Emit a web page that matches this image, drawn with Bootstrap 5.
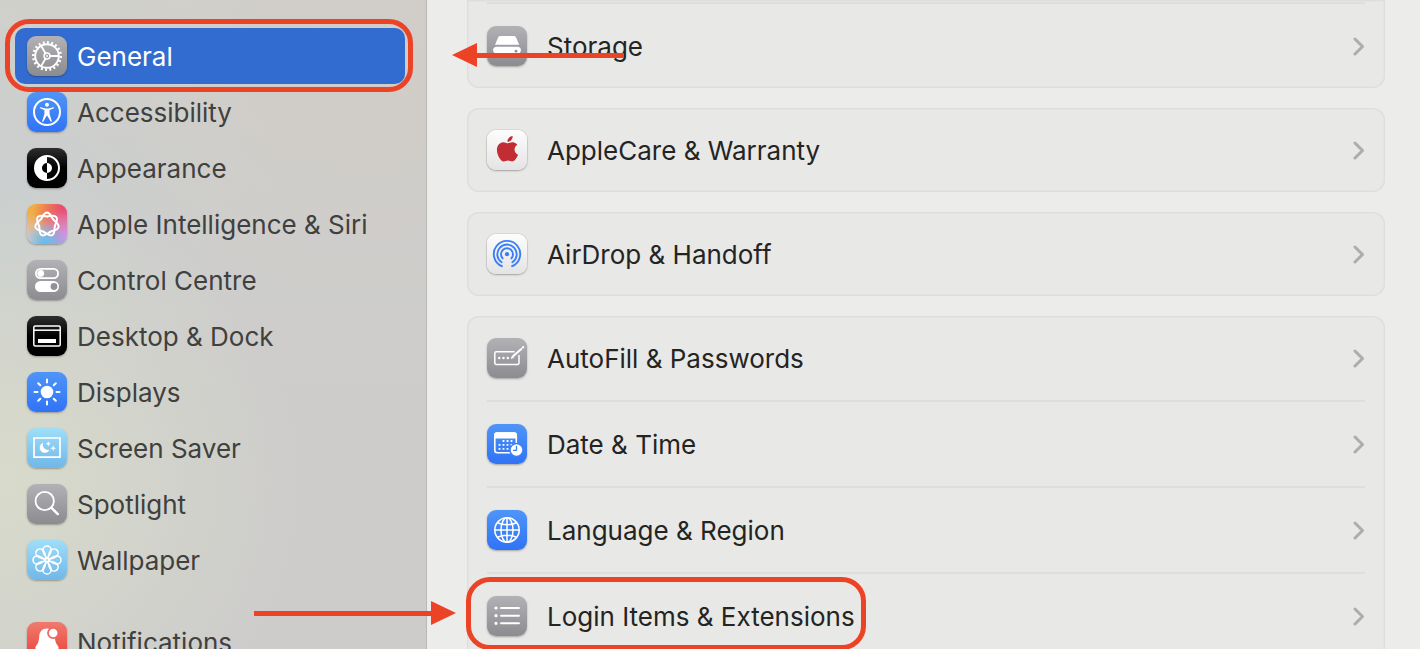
<!DOCTYPE html>
<html lang="en-GB">
<head>
<meta charset="utf-8">
<meta name="viewport" content="width=device-width, initial-scale=1">
<title>System Settings – General</title>
<link href="https://cdn.jsdelivr.net/npm/bootstrap@5.3.0/dist/css/bootstrap.min.css" rel="stylesheet">
<style>
  :root { --callout: #ec4225; --divider: #dededc; }
  body { font-family: Inter, "Liberation Sans", sans-serif; font-size: 26px; line-height: 32px; color: #242423; background: #ececea; }
  a { color: inherit; text-decoration: none; }
  .item-text { padding-top: 2px; white-space: nowrap; }

  .settings-sidebar {
    flex: 0 0 427px;
    padding: 28px 21px 0 15px;
    border-right: 1px solid #b9b8b6;
    color: #40403e;
    background:
      radial-gradient(circle at 0 480px, #d8dbcb 0, rgba(216, 219, 203, 0) 300px),
      radial-gradient(circle at 0 220px, #cacfcf 0, rgba(202, 207, 207, 0) 220px),
      radial-gradient(circle at 370px 60px, #d1ccc7 0, rgba(209, 204, 199, 0) 240px),
      linear-gradient(#d0d0cb, #cdcccb 60%);
  }
  .side-item { height: 56px; padding: 0 12px; gap: 10px; border-radius: 10px; }
  .side-item.active { background: #326cd1; color: #fff; }
  .side-group + .side-group { margin-top: 26px; }

  .settings-main { padding: 0 35px 0 40px; gap: 20px; }
  .pane { background: #e8e8e6; border-radius: 12px; box-shadow: inset 0 0 0 1px #dededc, inset 0 0 0 2px #e4e4e2; }
  .pane-continued { border-top-left-radius: 0; border-top-right-radius: 0; padding-top: 2px; }
  .pane li { padding: 0 20px; }
  .pane-row { height: 84px; }
  .pane li + li .pane-row, .pane-continued .pane-row { border-top: 2px solid var(--divider); height: 86px; }
  .pane-label { gap: 20px; }

  .tile { width: 40px; height: 40px; flex: none; border-radius: 9px; color: #fff; box-shadow: 0 1px 2px rgba(0, 0, 0, .3); }
  .tile svg { display: block; width: 40px; height: 40px; fill: none; stroke: currentColor; stroke-linecap: round; stroke-linejoin: round; }
  .tile-grey { background: linear-gradient(#b2b1b6, #8c8b90); }
  .tile-blue { background: linear-gradient(#4f95f7, #3073f6); }
  .tile-black { background: linear-gradient(#2e2e2e, #000 50%); }
  .tile-sky { background: linear-gradient(#9fdef8, #70b7e9); }
  .tile-red { background: linear-gradient(#ef7a6e, #ea3f33); }
  .tile-white { background: linear-gradient(#fdfdfd, #e4e4e4); box-shadow: 0 0 0 1px rgba(0, 0, 0, .06), 0 1px 2px rgba(0, 0, 0, .25); }
  .tile-siri { background:
      radial-gradient(circle at 45% 100%, #56c1f8 0, rgba(86, 193, 248, 0) 50%),
      radial-gradient(circle at 100% 85%, #cf95f5 0, rgba(207, 149, 245, 0) 60%),
      radial-gradient(circle at 95% 15%, #ed4069 0, rgba(237, 64, 105, 0) 62%),
      radial-gradient(circle at 0 95%, #dfd0dc 0, rgba(223, 208, 220, 0) 55%),
      linear-gradient(135deg, #f4b43c, #e0826c); }
  .chevron { width: 12px; height: 20px; flex: none; fill: none; stroke: #adadab; stroke-width: 3; stroke-linecap: round; stroke-linejoin: round; }

  .callout-frame { border: 5px solid var(--callout); border-radius: 24px; pointer-events: none; }
  .frame-general { inset: -9px -8px -8px -10px; }
  .frame-login { inset: -19px -11px -14px -21px; }
  .callout-arrow { fill: var(--callout); pointer-events: none; }
  .arrow-general { left: -35px; top: 39px; }
  .arrow-login { right: 100%; margin-right: 31px; top: 5px; }
</style>
</head>
<body>
<svg class="d-none" aria-hidden="true">
  <symbol id="chevron" viewBox="0 0 12 20"><path d="M2 3l7.500 7.500L2 18"/></symbol>
</svg>

<div class="d-flex vh-100 overflow-hidden">
  <nav class="settings-sidebar" aria-label="Settings">
    <ul class="side-group list-unstyled mb-0">
      <li><a href="#" class="side-item active d-flex align-items-center position-relative" aria-current="page">
        <span class="tile tile-grey"><svg viewBox="0 0 40 40">
          <circle cx="20" cy="20" r="13.700" stroke-width="2.600" stroke-linecap="butt" pathLength="40" stroke-dasharray=".9 1.100"/>
          <circle cx="20" cy="20" r="11.800" stroke-width="1.900"/>
          <circle cx="20" cy="20" r="3" stroke-width="1.500"/><circle cx="20" cy="20" r="1" fill="currentColor" stroke="none"/>
          <path stroke-width="1.900" d="M23 20h8.500M18.500 17.400l-4.200-7.300M18.500 22.600l-4.200 7.300"/></svg></span>
        <span class="item-text">General</span>
        <span class="callout-frame frame-general position-absolute"></span></a></li>
      <li><a href="#" class="side-item d-flex align-items-center">
        <span class="tile tile-blue"><svg viewBox="0 0 40 40">
          <circle cx="20" cy="20" r="13" stroke-width="2"/>
          <circle cx="20" cy="12.800" r="2" fill="currentColor" stroke="none"/>
          <path fill="currentColor" stroke-width="1.200" d="M13.500 15.800l4.700 1.200h3.600l4.700-1.200-4.500 2v4.500l2.200 7-3.700-6.300h-1l-3.700 6.300 2.200-7v-4.500z"/></svg></span>
        <span class="item-text">Accessibility</span></a></li>
      <li><a href="#" class="side-item d-flex align-items-center">
        <span class="tile tile-black"><svg viewBox="0 0 40 40">
          <circle cx="20" cy="20" r="12" stroke-width="2"/>
          <path fill="currentColor" stroke="none" d="M20 8v7a5 5 0 0 0 0 10v7a12 12 0 0 1 0-24zM20 15a5 5 0 0 1 0 10z"/></svg></span>
        <span class="item-text">Appearance</span></a></li>
      <li><a href="#" class="side-item d-flex align-items-center">
        <span class="tile tile-siri"><svg viewBox="0 0 40 40">
          <defs><path id="petal" d="M-6.300-5C-4-8-3.200-11.900 0-11.900S4-8 6.300-5"/></defs>
          <g transform="translate(20 20.500)" stroke-width="2">
            <use href="#petal"/><use href="#petal" transform="rotate(51.430)"/><use href="#petal" transform="rotate(102.860)"/><use href="#petal" transform="rotate(154.290)"/><use href="#petal" transform="rotate(205.710)"/><use href="#petal" transform="rotate(257.140)"/><use href="#petal" transform="rotate(308.570)"/></g></svg></span>
        <span class="item-text">Apple Intelligence &amp; Siri</span></a></li>
      <li><a href="#" class="side-item d-flex align-items-center">
        <span class="tile tile-grey"><svg viewBox="0 0 40 40">
          <rect x="8.900" y="8.900" width="22.200" height="9.200" rx="4.600" stroke-width="1.800"/>
          <circle cx="13.700" cy="13.500" r="3.400" fill="currentColor" stroke="none"/>
          <rect x="8" y="21" width="24" height="11" rx="5.500" fill="currentColor" stroke="none"/>
          <circle cx="27" cy="26.500" r="3.400" fill="#929196" stroke="none"/></svg></span>
        <span class="item-text">Control Centre</span></a></li>
      <li><a href="#" class="side-item d-flex align-items-center">
        <span class="tile tile-black"><svg viewBox="0 0 40 40">
          <rect x="6.800" y="10" width="26.400" height="20" rx="1.500" stroke-width="1.500"/>
          <path stroke-width="1.500" stroke-linecap="butt" d="M7 14.200h26"/>
          <path fill="currentColor" stroke="none" d="M11 23h18v4H11z"/></svg></span>
        <span class="item-text">Desktop &amp; Dock</span></a></li>
      <li><a href="#" class="side-item d-flex align-items-center">
        <span class="tile tile-blue"><svg viewBox="0 0 40 40">
          <circle cx="20" cy="20" r="6.300" fill="currentColor" stroke="none"/>
          <path stroke-width="2" d="M20 7.500v3M20 29.500v3M7.500 20h3M29.500 20h3M11.200 11.200l2.100 2.100M26.700 26.700l2.100 2.100M11.200 28.800l2.100-2.100M26.700 13.300l2.100-2.100"/></svg></span>
        <span class="item-text">Displays</span></a></li>
      <li><a href="#" class="side-item d-flex align-items-center">
        <span class="tile tile-sky"><svg viewBox="0 0 40 40">
          <path stroke-width="1.700" stroke-linejoin="miter" d="M7 10h26v19.200H7z"/>
          <path fill="currentColor" stroke="none" d="M16 14.800a5.200 5.200 0 1 0 6.600 7 5.400 5.400 0 0 1-6.600-7zM21.300 13.200l.7 1.800 1.800.7-1.800.7-.7 1.800-.7-1.800-1.800-.7 1.800-.7zM26.200 17.200l.8 2.200 2.200.8-2.200.8-.8 2.200-.8-2.200-2.200-.8 2.200-.8z"/></svg></span>
        <span class="item-text">Screen Saver</span></a></li>
      <li><a href="#" class="side-item d-flex align-items-center">
        <span class="tile tile-grey"><svg viewBox="0 0 40 40">
          <circle cx="17.700" cy="17" r="9.200" stroke-width="1.800"/><path stroke-width="2.400" d="M24.500 23.800l6.300 6.300"/></svg></span>
        <span class="item-text">Spotlight</span></a></li>
      <li><a href="#" class="side-item d-flex align-items-center">
        <span class="tile tile-sky"><svg viewBox="0 0 40 40">
          <defs><path id="leaf" d="M0-1.500C-2.600-4.500-4.100-7.500-4.100-9.900a4.100 4.100 0 0 1 8.200 0C4.100-7.500 2.600-4.500 0-1.500z"/></defs>
          <g transform="translate(20 20)" stroke-width="1.500">
            <use href="#leaf"/><use href="#leaf" transform="rotate(45)"/><use href="#leaf" transform="rotate(90)"/><use href="#leaf" transform="rotate(135)"/><use href="#leaf" transform="rotate(180)"/><use href="#leaf" transform="rotate(225)"/><use href="#leaf" transform="rotate(270)"/><use href="#leaf" transform="rotate(315)"/></g></svg></span>
        <span class="item-text">Wallpaper</span></a></li>
    </ul>
    <ul class="side-group list-unstyled mb-0">
      <li><a href="#" class="side-item d-flex align-items-center">
        <span class="tile tile-red"><svg viewBox="0 0 40 40">
          <path fill="currentColor" stroke="none" d="M20 6.500c-5 0-7.500 3.500-7.800 8-.3 5-1.200 7-3.200 9.500-1 1.300-1 3.500 1 3.500h20c2 0 2-2.200 1-3.500-2-2.500-2.900-4.500-3.200-9.500-.3-4.500-2.800-8-7.800-8zM16.500 29h7a3.500 3.500 0 0 1-7 0z"/>
          <circle cx="26.200" cy="11" r="5.200" fill="currentColor" stroke="#ed6a5e" stroke-width="1.800"/></svg></span>
        <span class="item-text">Notifications</span></a></li>
    </ul>
  </nav>

  <main class="settings-main flex-grow-1 d-flex flex-column">
    <ul class="pane pane-continued list-unstyled mb-0">
      <li><a href="#" class="pane-row d-flex align-items-center justify-content-between position-relative">
        <span class="pane-label d-flex align-items-center">
          <span class="tile tile-grey"><svg viewBox="0 0 40 40">
            <path fill="currentColor" stroke="none" d="M13.500 10h13c1.400 0 2.200.6 2.700 1.800l3 7H8l3-7c.5-1.200 1.200-1.800 2.500-1.800zM9.500 20.700h21c2 0 3.500 1.300 3.500 3.200s-1.500 3.400-3.500 3.400h-21c-2 0-3.500-1.500-3.500-3.400s1.500-3.200 3.500-3.200z"/>
            <circle cx="29" cy="25.200" r="1.400" fill="#929196" stroke="none"/></svg></span>
          <span class="item-text">Storage</span></span>
        <svg class="chevron" aria-hidden="true"><use href="#chevron"/></svg>
        <svg class="callout-arrow arrow-general position-absolute" width="172" height="24" viewBox="0 0 172 24" aria-hidden="true"><path d="M0 12L25 0v10h147v5H25v9z"/></svg></a></li>
    </ul>

    <ul class="pane list-unstyled mb-0">
      <li><a href="#" class="pane-row d-flex align-items-center justify-content-between">
        <span class="pane-label d-flex align-items-center">
          <span class="tile tile-white"><svg viewBox="0 0 40 40">
            <path transform="translate(7.500 6) scale(1.080 1.060)" fill="#c22d33" stroke="none" d="M12.152 6.896c-.948 0-2.415-1.078-3.960-1.040-2.040.027-3.910 1.183-4.961 3.014-2.117 3.675-.546 9.103 1.519 12.090 1.013 1.454 2.208 3.090 3.792 3.039 1.520-.065 2.090-.987 3.935-.987 1.831 0 2.350.987 3.960.948 1.637-.026 2.676-1.480 3.676-2.948 1.156-1.688 1.636-3.325 1.662-3.415-.039-.013-3.182-1.221-3.220-4.857-.026-3.040 2.480-4.494 2.597-4.559-1.429-2.090-3.623-2.324-4.390-2.376-2-.156-3.675 1.090-4.610 1.090zM15.530 3.830c.843-1.012 1.400-2.427 1.245-3.830-1.207.052-2.662.805-3.532 1.818-.780.896-1.454 2.338-1.273 3.714 1.338.104 2.715-.688 3.559-1.701"/></svg></span>
          <span class="item-text">AppleCare &amp; Warranty</span></span>
        <svg class="chevron" aria-hidden="true"><use href="#chevron"/></svg></a></li>
    </ul>

    <ul class="pane list-unstyled mb-0">
      <li><a href="#" class="pane-row d-flex align-items-center justify-content-between">
        <span class="pane-label d-flex align-items-center">
          <span class="tile tile-white"><svg viewBox="0 0 40 40" stroke-width="1.900">
            <g stroke="#3a7ff5">
            <path d="M14.900 32.200a13.200 13.200 0 1 1 10.200 0"/>
            <path d="M14.600 28.300a9.700 9.700 0 1 1 10.800 0"/>
            <path d="M15.600 24.400a6 6 0 1 1 8.800 0"/></g>
            <circle cx="20" cy="20.200" r="2.100" fill="#3a7ff5" stroke="none"/></svg></span>
          <span class="item-text">AirDrop &amp; Handoff</span></span>
        <svg class="chevron" aria-hidden="true"><use href="#chevron"/></svg></a></li>
    </ul>

    <ul class="pane list-unstyled mb-0">
      <li><a href="#" class="pane-row d-flex align-items-center justify-content-between">
        <span class="pane-label d-flex align-items-center">
          <span class="tile tile-grey"><svg viewBox="0 0 40 40">
            <path stroke-width="1.500" d="M27 13.700H9.300a1.500 1.500 0 0 0-1.500 1.500v9.800a1.500 1.500 0 0 0 1.500 1.500h21.200a1.500 1.500 0 0 0 1.500-1.500v-7.500"/>
            <path stroke-width="2.200" d="M26 18.300l8-7.100M35.800 9.500l.4-.4"/><path fill="currentColor" stroke-width=".5" d="M24 20.500l1.200-2.500 1.400 1.500z"/>
            <path stroke-width="2.400" d="M12.200 20h.01M16.500 20h.01M20.800 20h.01"/></svg></span>
          <span class="item-text">AutoFill &amp; Passwords</span></span>
        <svg class="chevron" aria-hidden="true"><use href="#chevron"/></svg></a></li>
      <li><a href="#" class="pane-row d-flex align-items-center justify-content-between">
        <span class="pane-label d-flex align-items-center">
          <span class="tile tile-blue"><svg viewBox="0 0 40 40">
            <rect x="7.800" y="9" width="21.500" height="19.700" rx="2.500" stroke-width="1.600"/>
            <path fill="currentColor" stroke="none" d="M10 8.200h17a3 3 0 0 1 3 3v3.300H7v-3.300a3 3 0 0 1 3-3z"/>
            <path stroke-width="1.800" stroke-linecap="butt" stroke-dasharray="1.800 2.200" d="M15.600 17h10M11.600 20.900h14M11.600 24.800h10"/>
            <circle cx="29.500" cy="26" r="6.500" fill="currentColor" stroke="#3b80f6" stroke-width="1.400"/>
            <path stroke="#3b80f6" stroke-width="1.300" d="M29.500 22.300v4h-3"/></svg></span>
          <span class="item-text">Date &amp; Time</span></span>
        <svg class="chevron" aria-hidden="true"><use href="#chevron"/></svg></a></li>
      <li><a href="#" class="pane-row d-flex align-items-center justify-content-between">
        <span class="pane-label d-flex align-items-center">
          <span class="tile tile-blue"><svg viewBox="0 0 40 40" stroke-width="1.500">
            <circle cx="20" cy="20" r="12.200"/><ellipse cx="20" cy="20" rx="6" ry="12.200"/>
            <path d="M20 7.800v24.400M7.800 20h24.400M10.500 12.800c5.500 2.600 13.500 2.600 19 0M10.500 27.200c5.500-2.600 13.500-2.600 19 0"/></svg></span>
          <span class="item-text">Language &amp; Region</span></span>
        <svg class="chevron" aria-hidden="true"><use href="#chevron"/></svg></a></li>
      <li><a href="#" class="pane-row d-flex align-items-center justify-content-between">
        <span class="pane-label d-flex align-items-center position-relative">
          <span class="tile tile-grey"><svg viewBox="0 0 40 40">
            <path stroke-width="1.900" d="M14 12h18M14 19.700h18M14 27.300h18"/>
            <path stroke-width="3.200" d="M9 12h.01M9 19.700h.01M9 27.300h.01"/></svg></span>
          <span class="item-text">Login Items &amp; Extensions</span>
          <span class="callout-frame frame-login position-absolute"></span>
          <svg class="callout-arrow arrow-login position-absolute" width="202" height="24" viewBox="0 0 202 24" aria-hidden="true"><path d="M202 12L177 0v10H0v5h177v9z"/></svg></span>
        <svg class="chevron" aria-hidden="true"><use href="#chevron"/></svg></a></li>
    </ul>
  </main>
</div>
<script src="https://cdn.jsdelivr.net/npm/bootstrap@5.3.0/dist/js/bootstrap.bundle.min.js"></script>
</body>
</html>
